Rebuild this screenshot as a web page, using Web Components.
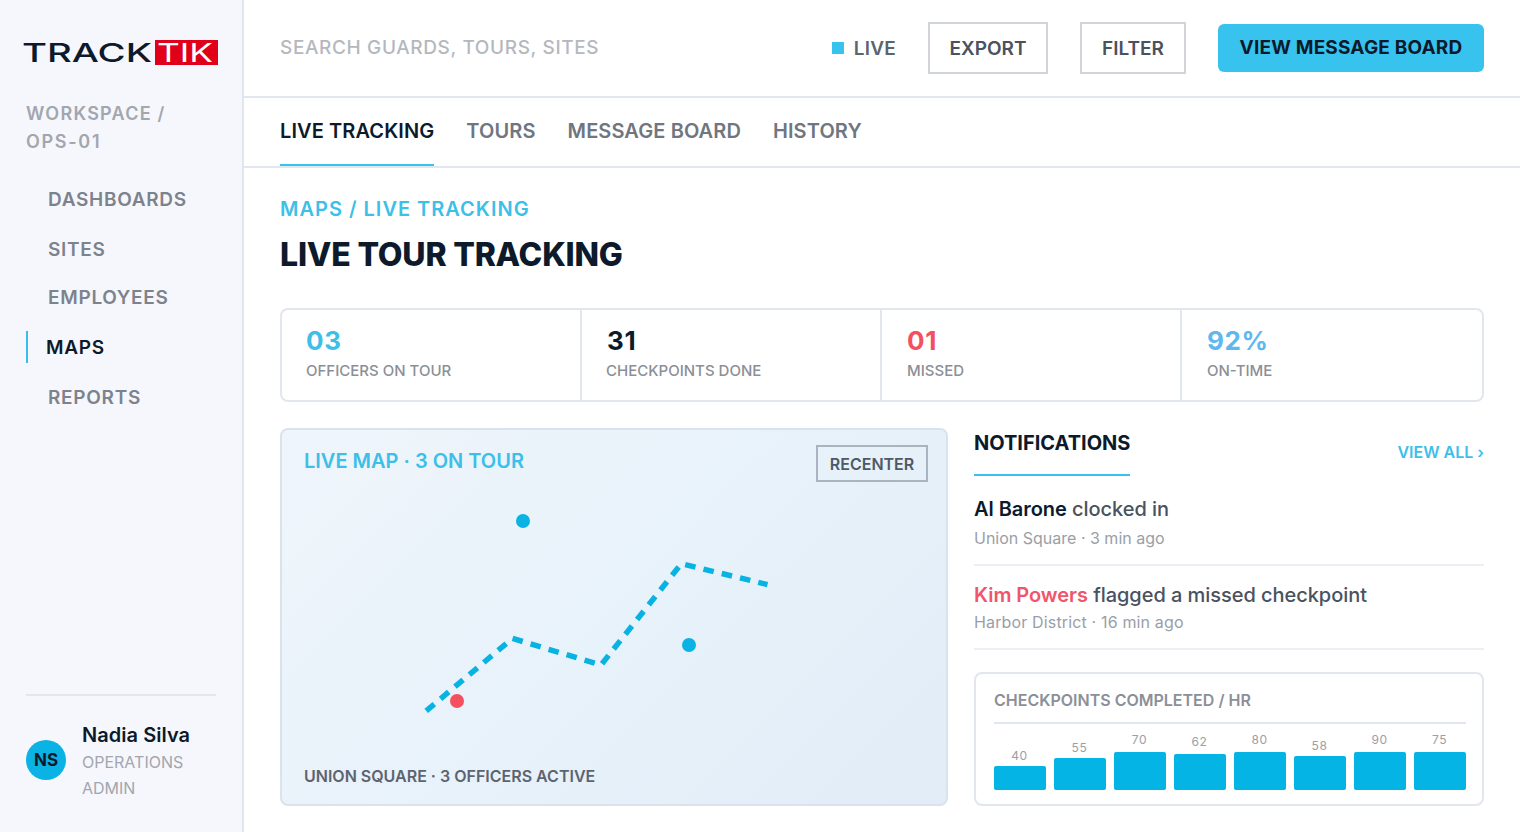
<!DOCTYPE html>
<html lang="en">
<head>
<meta charset="UTF-8">
<title>TrackTik - Live Tour Tracking</title>
<style>
    html, body { margin: 0; height: 100%; }
    body { font-family: Inter, "Liberation Sans", sans-serif; background: #fff; overflow: hidden; }
    app-shell { height: 832px; }
</style>
</head>
<body>
<app-shell>
    <side-bar slot="side"></side-bar>
    <top-bar slot="top"></top-bar>
    <tab-bar slot="top"></tab-bar>
    <page-title></page-title>
    <stat-strip></stat-strip>
    <div class="lower" style="display:grid;grid-template-columns:668px 510px;column-gap:26px;margin-top:26px">
        <live-map></live-map>
        <div>
            <notice-list></notice-list>
            <bar-chart></bar-chart>
        </div>
    </div>
</app-shell>

<script>
    // small helper, every element just sets its shadow html once
    class Base extends HTMLElement {
        connectedCallback() {
            if (!this.shadowRoot) {
                this.attachShadow({ mode: 'open' }).innerHTML = this.render();
            }
        }
    }

    class AppShell extends Base {
        render() {
            return `<style>
                :host { display: grid; grid-template-columns: 244px 1fr; }
                .main { display: flex; flex-direction: column; min-width: 0; }
                .content { padding: 27px 36px 0; }
            </style>
            <slot name="side"></slot>
            <div class="main">
                <slot name="top"></slot>
                <div class="content"><slot></slot></div>
            </div>`;
        }
    }

    class SideBar extends Base {
        render() {
            return `<style>
                :host { display: flex; flex-direction: column; box-sizing: border-box; height: 832px; background: #f5f7fc; border-right: 2px solid #e2e6ef; padding: 34px 24px 0 24px; }
                .logo { display: block; margin: 0 0 29px -4px; }
                .ws { margin-left: 2px; font-size: 18px; font-weight: 600; line-height: 28px; letter-spacing: 1.25px; color: #a2a6ae; }
                .ws span { letter-spacing: 1.7px; }
                nav { display: flex; flex-direction: column; margin: 27px 0 0 2px; }
                a { display: flex; align-items: center; height: 32px; margin-bottom: 18px; padding-left: 22px; font-size: 19px; font-weight: 600; letter-spacing: .7px; color: #7d838c; }
                a.tight { margin-bottom: 16px; }
                a.on { color: #0c1a2b; border-left: 2px solid #38bdec; padding-left: 18px; }
                .user { margin: auto 2px 0; border-top: 2px solid #e2e6ef; height: 136px; display: flex; gap: 16px; align-items: flex-start; }
                .av { flex: none; width: 40px; height: 40px; margin-top: 44px; border-radius: 50%; background: #0bb2e4; color: #0c1a2b; font-size: 17px; font-weight: 700; display: flex; align-items: center; justify-content: center; }
                .who { padding-top: 25px; }
                .name { font-size: 20px; font-weight: 600; line-height: 28px; color: #0c1a2b; letter-spacing: .05px; }
                .role { font-size: 16px; line-height: 26px; color: #a2a6ae; width: 110px; }
            </style>
            <svg class="logo" width="198" height="37" viewBox="0 0 198 37">
                <text x="2" y="28" font-family="Inter, sans-serif" font-size="26" font-weight="500" fill="#0c1a2b" textLength="130" lengthAdjust="spacingAndGlyphs">TRACK</text>
                <rect x="135" y="6" width="63" height="25" fill="#e1001a"/>
                <text x="137" y="28" font-family="Inter, sans-serif" font-size="26" font-weight="400" fill="#fff" textLength="56" lengthAdjust="spacingAndGlyphs">TIK</text>
            </svg>
            <div class="ws">WORKSPACE /<br><span>OPS-01</span></div>
            <nav>
                <a>DASHBOARDS</a>
                <a class="tight">SITES</a>
                <a>EMPLOYEES</a>
                <a class="on">MAPS</a>
                <a>REPORTS</a>
            </nav>
            <div class="user">
                <div class="av">NS</div>
                <div class="who">
                    <div class="name">Nadia Silva</div>
                    <div class="role">OPERATIONS ADMIN</div>
                </div>
            </div>`;
        }
    }

    class TopBar extends Base {
        render() {
            return `<style>
                :host { display: flex; align-items: center; box-sizing: border-box; height: 98px; padding: 0 36px; border-bottom: 2px solid #e2e6ef; }
                .search { flex: 1; font-size: 19px; font-weight: 500; letter-spacing: .63px; color: #b4b8be; margin-top: -2px; }
                .live { display: flex; align-items: center; gap: 10px; font-size: 19px; font-weight: 600; letter-spacing: .25px; color: #5c6470; margin-right: 32px; }
                .live i { width: 12px; height: 12px; background: #38c3ef; }
                .btn { box-sizing: border-box; height: 52px; display: flex; align-items: center; justify-content: center; font-size: 19px; font-weight: 600; color: #4a5260; border: 2px solid #d0d3d8; margin-right: 32px; }
                .cta { width: 266px; height: 48px; margin: 0; border: 0; border-radius: 6px; background: #38c3ef; color: #0c1a2b; font-weight: 700; font-size: 19px; letter-spacing: .18px; padding-bottom: 1px; }
            </style>
            <div class="search">SEARCH GUARDS, TOURS, SITES</div>
            <div class="live"><i></i>LIVE</div>
            <div class="btn" style="width:120px">EXPORT</div>
            <div class="btn" style="width:106px">FILTER</div>
            <div class="btn cta">VIEW MESSAGE BOARD</div>`;
        }
    }

    class TabBar extends Base {
        render() {
            return `<style>
                :host { display: flex; gap: 32px; box-sizing: border-box; height: 70px; padding: 0 36px; border-bottom: 2px solid #e2e6ef; }
                div { height: 68px; box-sizing: border-box; padding-top: 20px; line-height: 26px; font-size: 20px; font-weight: 600; letter-spacing: .1px; color: #6f7680; }
                .on { color: #0c1a2b; border-bottom: 2px solid #38c3ef; }
            </style>
            <div class="on">LIVE TRACKING</div><div>TOURS</div><div>MESSAGE BOARD</div><div>HISTORY</div>`;
        }
    }

    class PageTitle extends Base {
        render() {
            return `<style>
                :host { display: block; height: 113px; }
                .crumb { font-size: 20px; line-height: 28px; font-weight: 600; letter-spacing: 1px; color: #3cbfe8; }
                h1 { margin: 12px 0 0; font-size: 32px; line-height: 40px; font-weight: 800; letter-spacing: -.2px; color: #0c1a2b; }
            </style>
            <div class="crumb">MAPS / LIVE TRACKING</div>
            <h1>LIVE TOUR TRACKING</h1>`;
        }
    }

    class StatStrip extends Base {
        render() {
            const stats = [['03', 'OFFICERS ON TOUR', '#3cbfe8'], ['31', 'CHECKPOINTS DONE', '#0c1a2b'], ['01', 'MISSED', '#f4505f'], ['92%', 'ON-TIME', '#5cb8ee']];
            return `<style>
                :host { display: grid; grid-template-columns: 300px 300px 300px 1fr; box-sizing: border-box; height: 94px; border: 2px solid #e2e6ef; border-radius: 8px; }
                .c { padding: 15px 24px 0 25px; border-right: 2px solid #e2e6ef; box-sizing: border-box; }
                .c.first { padding-left: 24px; }
                .c.second span { margin-left: -1px; }
                .c:last-child { border-right: 0; }
                b { display: block; font-size: 26px; line-height: 32px; font-weight: 700; letter-spacing: .6px; }
                span { display: block; margin-top: 2px; font-size: 15px; line-height: 24px; font-weight: 500; color: #8b8f97; }
            </style>` + stats.map((s, i) => `<div class="c ${['first', 'second', '', ''][i]}"><b style="color:${s[2]}">${s[0]}</b><span>${s[1]}</span></div>`).join('');
        }
    }

    class LiveMap extends Base {
        render() {
            return `<style>
                :host { display: flex; flex-direction: column; justify-content: space-between; position: relative; box-sizing: border-box; height: 378px; padding: 15px 18px 16px 22px; border: 2px solid #d9e3ee; border-radius: 8px; background: linear-gradient(135deg, #eff5fb, #e8f2fa 50%, #e2ecf7); }
                .top { display: flex; justify-content: space-between; align-items: flex-start; }
                .t { font-size: 20px; line-height: 30px; padding-top: 1px; font-weight: 600; color: #3cbfe8; }
                .btn { box-sizing: border-box; width: 112px; height: 37px; display: flex; align-items: center; justify-content: center; border: 2px solid #a9b4c0; font-size: 16px; font-weight: 600; color: #4f5866; }
                .foot { font-size: 16px; line-height: 24px; font-weight: 600; color: #5c6470; }
                svg { position: absolute; left: -2px; top: -2px; }
            </style>
            <svg width="668" height="378" viewBox="280 428 668 378">
                <polyline points="426.2,710.9 512.4,638.4 601,665 681.3,563.7 767.5,584.6" fill="none" stroke="#08b3e2" stroke-width="5.5" stroke-dasharray="10.6 8.2"/>
                <circle cx="523" cy="521" r="7" fill="#0bb2e4"/>
                <circle cx="689" cy="645" r="7" fill="#0bb2e4"/>
                <circle cx="457" cy="701" r="7" fill="#f4505f"/>
            </svg>
            <div class="top"><div class="t">LIVE MAP · 3 ON TOUR</div><div class="btn">RECENTER</div></div>
            <div class="foot">UNION SQUARE · 3 OFFICERS ACTIVE</div>`;
        }
    }

    class NoticeList extends Base {
        render() {
            return `<style>
                :host { display: block; }
                .head { display: flex; justify-content: space-between; align-items: flex-end; height: 48px; }
                .t { height: 48px; box-sizing: border-box; border-bottom: 2px solid #38c3ef; font-size: 20px; font-weight: 700; line-height: 30px; color: #0c1a2b; width: 156px; white-space: nowrap; }
                .all { font-size: 16px; font-weight: 600; line-height: 48px; height: 48px; color: #3cbfe8; }
                .row { box-sizing: border-box; border-bottom: 2px solid #eceff4; }
                .m { font-size: 20px; line-height: 30px; color: #4a5260; font-weight: 500; letter-spacing: -.05px; }
                .m b { font-weight: 600; color: #0c1a2b; }
                .m b.red { color: #f0566a; }
                .s { font-size: 16px; line-height: 26px; color: #9a9ea6; }
            </style>
            <div class="head"><div class="t">NOTIFICATIONS</div><div class="all">VIEW ALL ›</div></div>
            <div class="row" style="height:90px;padding-top:18px"><div class="m"><b>Al Barone</b> clocked in</div><div class="s" style="margin-top:1px">Union Square · 3 min ago</div></div>
            <div class="row" style="height:84px;padding-top:14px"><div class="m"><b class="red">Kim Powers</b> flagged a missed checkpoint</div><div class="s" style="margin-top:-1px;letter-spacing:.15px">Harbor District · 16 min ago</div></div>`;
        }
    }

    class BarChart extends Base {
        render() {
            // value, bar height, gap to the label
            const bars = [[40, 24, 2], [55, 32, 2], [70, 38, 4], [62, 36, 4], [80, 38, 4], [58, 34, 2], [90, 38, 4], [75, 38, 4]];
            return `<style>
                :host { display: block; box-sizing: border-box; height: 134px; margin-top: 22px; border: 2px solid #e2e6ef; border-radius: 8px; padding: 0 16px 0 18px; }
                .t { height: 50px; box-sizing: border-box; border-bottom: 2px solid #e2e6ef; font-size: 16px; line-height: 52px; font-weight: 600; color: #8b8f97; }
                .bars { display: grid; grid-template-columns: repeat(8, 52px); column-gap: 8px; align-items: end; height: 66px; }
                .b { display: flex; flex-direction: column; align-items: center; }
                span { font-size: 12px; line-height: 16px; letter-spacing: .6px; color: #9a9ea6; padding-right: 1px; }
                i { display: block; width: 100%; background: #04b4e5; border-radius: 2px; }
            </style>
            <div class="t">CHECKPOINTS COMPLETED / HR</div>
            <div class="bars">` + bars.map(b => `<div class="b"><span style="margin-bottom:${b[2]}px">${b[0]}</span><i style="height:${b[1]}px"></i></div>`).join('') + `</div>`;
        }
    }

    customElements.define('app-shell', AppShell);
    customElements.define('side-bar', SideBar);
    customElements.define('top-bar', TopBar);
    customElements.define('tab-bar', TabBar);
    customElements.define('page-title', PageTitle);
    customElements.define('stat-strip', StatStrip);
    customElements.define('live-map', LiveMap);
    customElements.define('notice-list', NoticeList);
    customElements.define('bar-chart', BarChart);
</script>
</body>
</html>
